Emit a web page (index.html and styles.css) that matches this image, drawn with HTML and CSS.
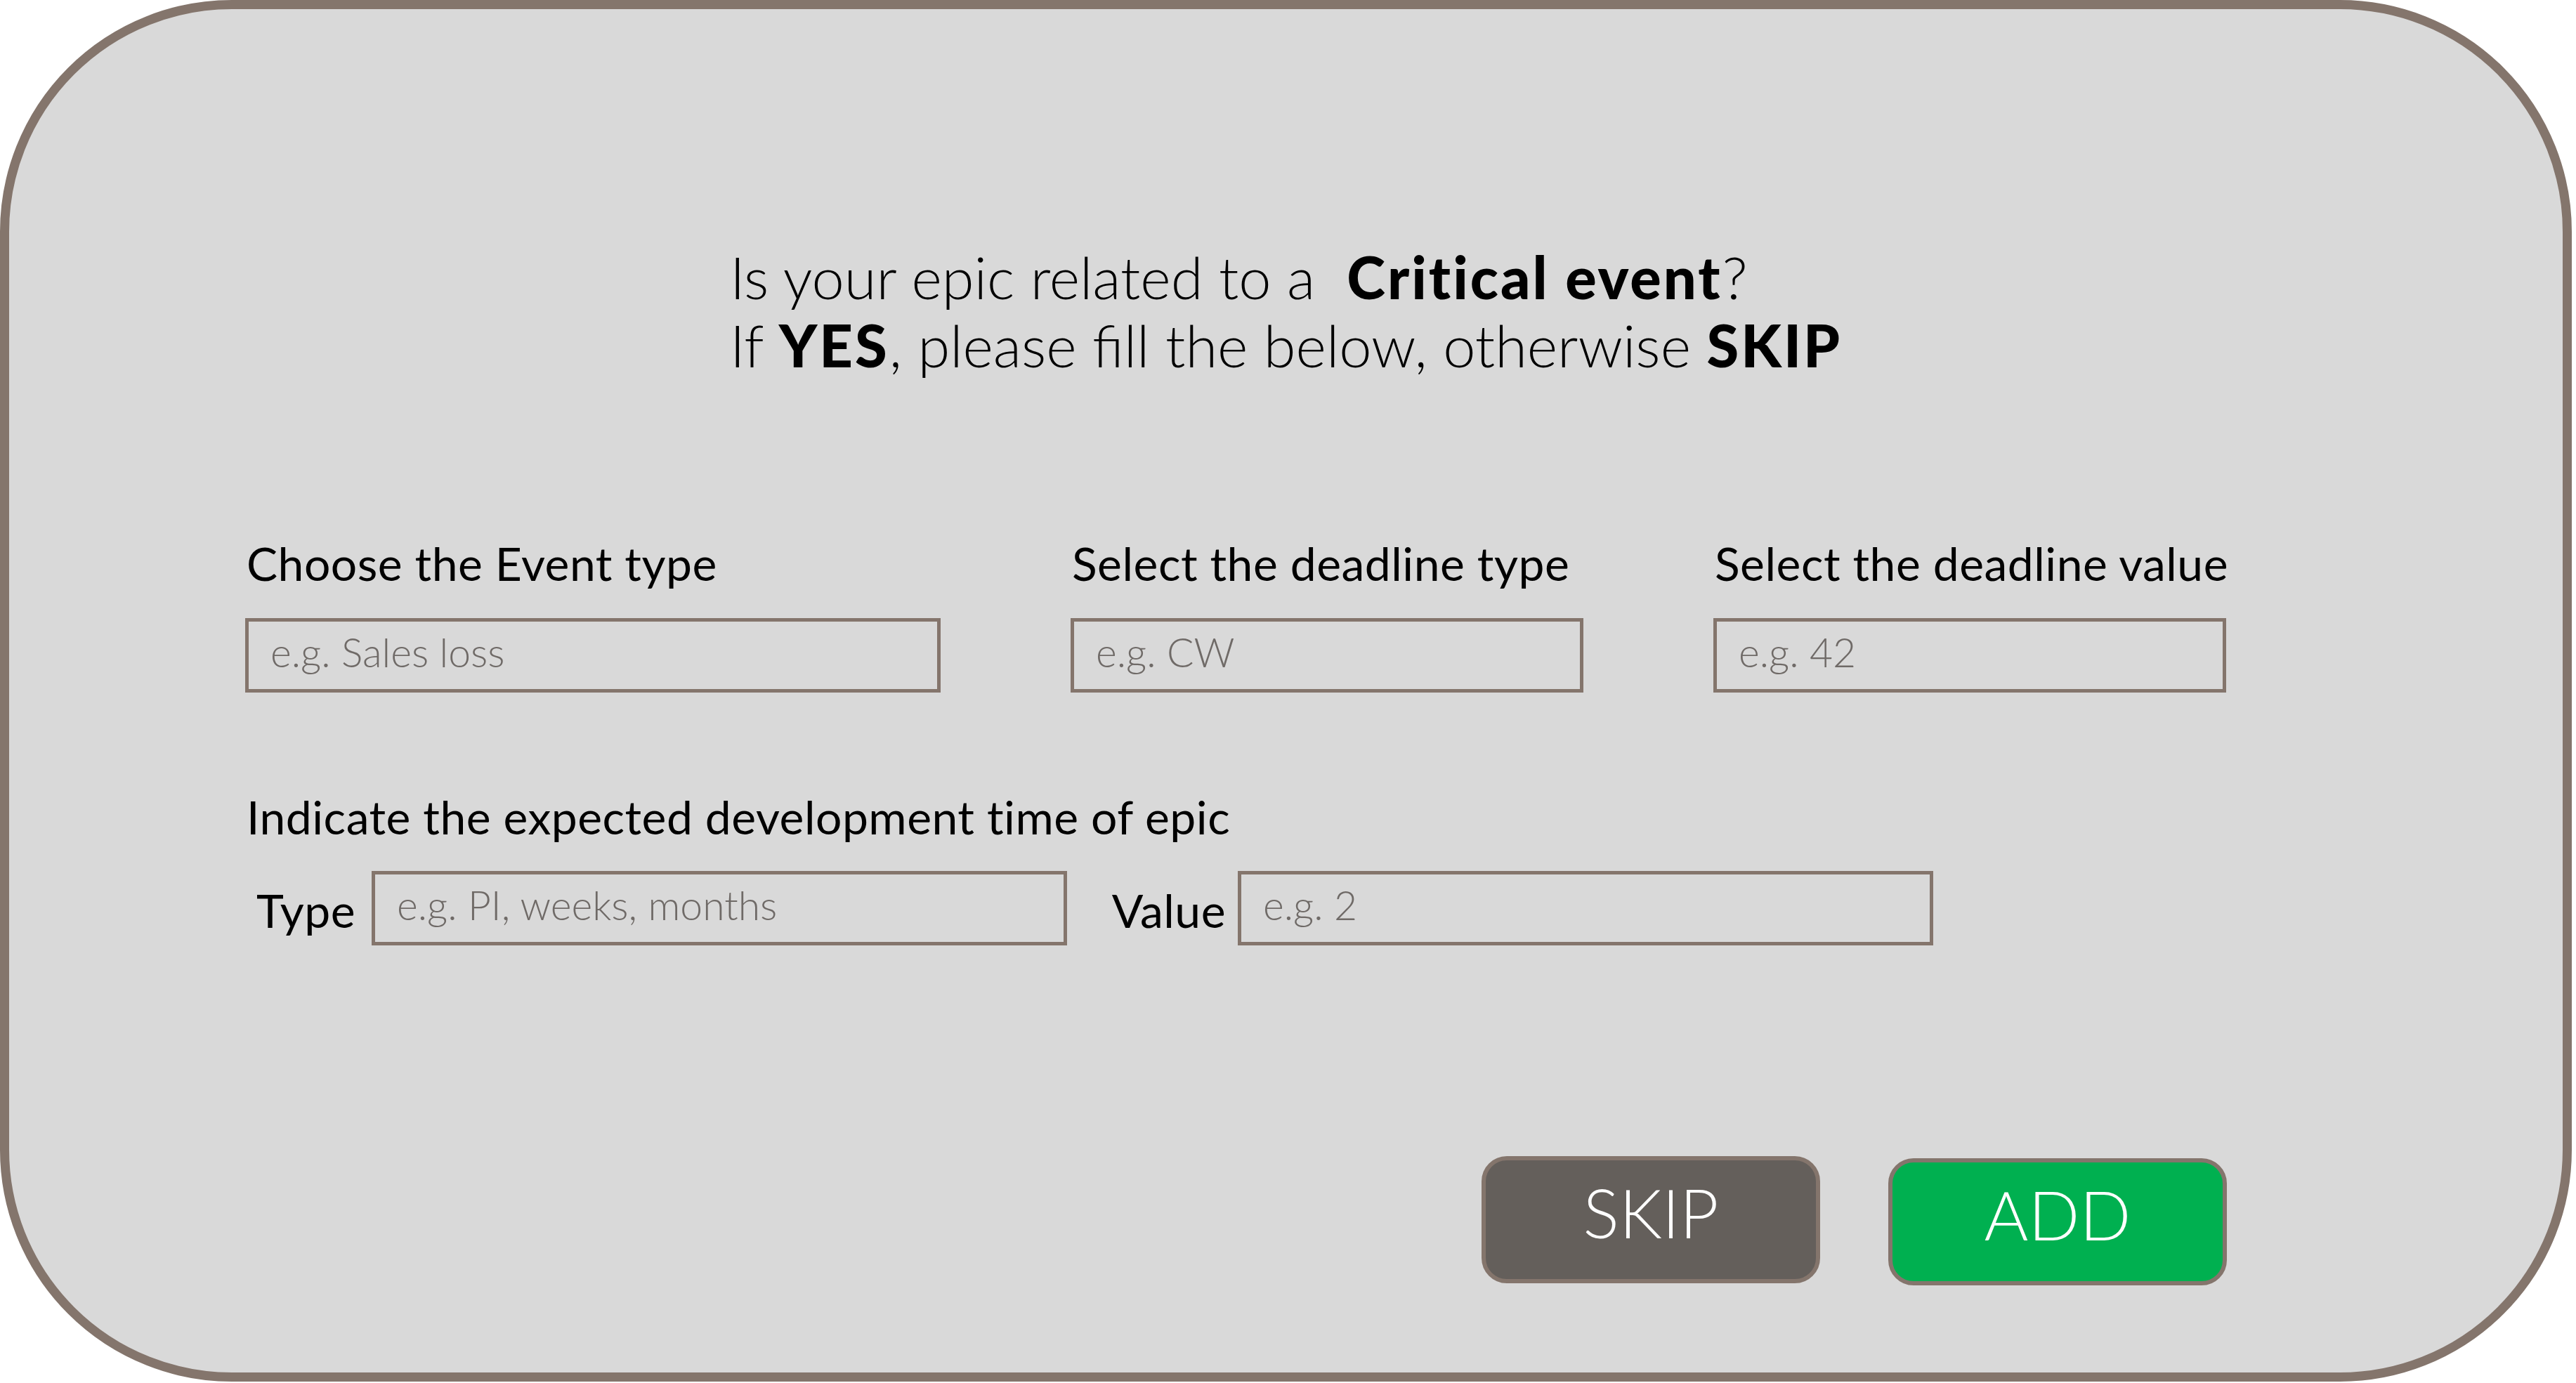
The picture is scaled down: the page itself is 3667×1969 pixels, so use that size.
FILE: index.html
```html
<!DOCTYPE html>
<html lang="en">
<head>
<meta charset="utf-8">
<title>Critical event</title>
<link rel="stylesheet" href="styles.css">
</head>
<body>
<div class="card">
  <div class="title">
    <div class="title-text">
      <div class="tline">Is your epic related to a&nbsp; <b>Critical event</b>?</div>
      <div class="tline">If <b>YES</b>, please fill the below, otherwise <b>SKIP</b></div>
    </div>
  </div>

  <div class="content">
    <div class="row1">
      <div class="field field-wide">
        <div class="label">Choose the Event type</div>
        <div class="input"><span class="ph">e.g. Sales loss</span></div>
      </div>
      <div class="field field-narrow">
        <div class="label">Select the deadline type</div>
        <div class="input"><span class="ph">e.g. CW</span></div>
      </div>
      <div class="field field-narrow">
        <div class="label">Select the deadline value</div>
        <div class="input"><span class="ph">e.g. 42</span></div>
      </div>
    </div>

    <div class="label heading2">Indicate the expected development time of epic</div>
    <div class="row2">
      <div class="label inline-label type-label">Type</div>
      <div class="input input-wide"><span class="ph">e.g. PI, weeks, months</span></div>
      <div class="label inline-label value-label">Value</div>
      <div class="input input-wide"><span class="ph">e.g. 2</span></div>
    </div>

    <div class="actions">
      <div class="btn btn-skip">SKIP</div>
      <div class="btn btn-add">ADD</div>
    </div>
  </div>
</div>
</body>
</html>
```

FILE: styles.css
```css
html, body {
  margin: 0;
  padding: 0;
  background: #ffffff;
}
body {
  font-family: "Lato", "Liberation Sans", sans-serif;
  color: #000000;
}
.card {
  box-sizing: border-box;
  width: 3661px;
  height: 1967px;
  border: 13px solid #84756c;
  border-radius: 330px;
  background: #d9d9d9;
  padding-top: 333px;
}
.title {
  display: flex;
  justify-content: center;
}
.title-text {
  font-size: 83px;
  font-weight: 300;
  line-height: 97px;
  letter-spacing: 0;
}
.title-text b {
  font-weight: 900;
  letter-spacing: 3px;
}
.content {
  width: 2821px;
  margin-left: 336px;
}
.row1 {
  display: flex;
  gap: 185px;
  margin-top: 222px;
}
.field {
  display: flex;
  flex-direction: column;
}
.field-wide { width: 990px; }
.field-narrow { width: 730px; }
.label {
  font-size: 66px;
  font-weight: 400;
  line-height: 80px;
  letter-spacing: 0.5px;
  padding-left: 2px;
  white-space: nowrap;
}
.input {
  box-sizing: border-box;
  height: 106px;
  border: 5px solid #84756c;
  margin-top: 38px;
  padding-left: 31px;
  display: flex;
  align-items: center;
}
.ph {
  font-size: 57px;
  font-weight: 300;
  letter-spacing: 0;
  color: #6f6a67;
  margin-top: -10px;
}
.heading2 {
  margin-top: 137px;
}
.row2 {
  display: flex;
  align-items: center;
  margin-top: 37px;
}
.row2 .input {
  margin-top: 0;
}
.input-wide { width: 990px; }
.inline-label {
  box-sizing: border-box;
  padding-top: 6px;
}
.type-label {
  width: 180px;
  padding-left: 16px;
}
.value-label {
  width: 243px;
  text-align: right;
  padding-right: 17px;
}
.actions {
  display: flex;
  justify-content: flex-end;
  gap: 97px;
  margin-top: 300px;
}
.btn {
  box-sizing: border-box;
  width: 482px;
  height: 181px;
  border: 6px solid #84756c;
  border-radius: 36px;
  color: #ffffff;
  font-size: 96px;
  font-weight: 300;
  display: flex;
  align-items: center;
  justify-content: center;
  padding-bottom: 22px;
}
.btn-skip {
  background: #645f5b;
}
.btn-add {
  background: #00b050;
  margin-top: 3px;
}
```
